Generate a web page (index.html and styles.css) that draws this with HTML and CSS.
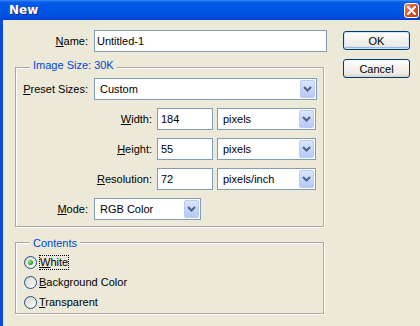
FILE: index.html
```html
<!DOCTYPE html>
<html lang="en">
<head>
  <meta charset="UTF-8" />
  <title>New</title>
  <link rel="stylesheet" href="styles.css">
</head>
<body>
  <div class="window">
    <div class="titlebar">
      <span class="title">New</span>
      <span class="close">
        <svg width="9" height="9" viewBox="0 0 9 9"><path d="M1 1 L8 8 M8 1 L1 8" stroke="#fff" stroke-width="2" stroke-linecap="square"/></svg>
      </span>
    </div>

    <div class="client">
      <div class="main">
        <div class="row">
          <label class="lbl name-lbl"><u>N</u>ame:</label>
          <input class="text name-input" type="text" value="Untitled-1">
        </div>

        <div class="group size-group">
          <div class="group-title">Image Size: 30K</div>
          <div class="size-rows">
            <div class="row">
              <label class="lbl wide-lbl"><u>P</u>reset Sizes:</label>
              <div class="select preset-select"><span>Custom</span><i class="arrow"><svg width="9" height="6" viewBox="0 0 9 6"><path d="M1 1 L4.5 4.5 L8 1" fill="none" stroke="#4d6185" stroke-width="2"/></svg></i></div>
            </div>
            <div class="row">
              <label class="lbl unit-lbl"><u>W</u>idth:</label>
              <input class="text unit-input" type="text" value="184">
              <div class="select unit-select"><span>pixels</span><i class="arrow"><svg width="9" height="6" viewBox="0 0 9 6"><path d="M1 1 L4.5 4.5 L8 1" fill="none" stroke="#4d6185" stroke-width="2"/></svg></i></div>
            </div>
            <div class="row">
              <label class="lbl unit-lbl"><u>H</u>eight:</label>
              <input class="text unit-input" type="text" value="55">
              <div class="select unit-select"><span>pixels</span><i class="arrow"><svg width="9" height="6" viewBox="0 0 9 6"><path d="M1 1 L4.5 4.5 L8 1" fill="none" stroke="#4d6185" stroke-width="2"/></svg></i></div>
            </div>
            <div class="row">
              <label class="lbl unit-lbl"><u>R</u>esolution:</label>
              <input class="text unit-input" type="text" value="72">
              <div class="select unit-select"><span>pixels/inch</span><i class="arrow"><svg width="9" height="6" viewBox="0 0 9 6"><path d="M1 1 L4.5 4.5 L8 1" fill="none" stroke="#4d6185" stroke-width="2"/></svg></i></div>
            </div>
            <div class="row">
              <label class="lbl wide-lbl"><u>M</u>ode:</label>
              <div class="select mode-select"><span>RGB Color</span><i class="arrow"><svg width="9" height="6" viewBox="0 0 9 6"><path d="M1 1 L4.5 4.5 L8 1" fill="none" stroke="#4d6185" stroke-width="2"/></svg></i></div>
            </div>
          </div>
        </div>

        <div class="group contents-group">
          <div class="group-title">Contents</div>
          <div class="radio-row"><span class="radio checked"></span><span class="radio-text focus"><u>W</u>hite</span></div>
          <div class="radio-row"><span class="radio"></span><span class="radio-text"><u>B</u>ackground Color</span></div>
          <div class="radio-row"><span class="radio"></span><span class="radio-text"><u>T</u>ransparent</span></div>
        </div>
      </div>

      <div class="buttons">
        <div class="btn btn-default">OK</div>
        <div class="btn">Cancel</div>
      </div>
    </div>
  </div>
</body>
</html>
```

FILE: styles.css
```css
* {
  margin: 0;
  padding: 0;
  box-sizing: border-box;
}

body {
  width: 420px;
  height: 326px;
  overflow: hidden;
  font-family: "Liberation Sans", Arial, sans-serif;
  font-size: 11px;
  color: #000;
  background: #ece9d8;
}

.window {
  display: flex;
  flex-direction: column;
  height: 326px;
}

/* title bar */
.titlebar {
  height: 20px;
  flex: none;
  display: flex;
  align-items: center;
  justify-content: space-between;
  padding: 0 1px 0 9px;
  background: linear-gradient(#3c8cf8 0, #0a5fe8 2px, #0058e6 5px, #0054e3 60%, #004bdc 88%, #003fcc 100%);
}

.title {
  font-family: "DejaVu Sans", sans-serif;
  font-weight: bold;
  font-size: 12px;
  line-height: 20px;
  color: #fff;
  text-shadow: 1px 1px #0b2a8c;
}

.close {
  width: 15px;
  height: 15px;
  display: flex;
  align-items: center;
  justify-content: center;
  border: 1px solid #fff;
  border-radius: 3px;
  background: linear-gradient(135deg, #e8906e, #d5522d 50%, #c13c17);
}

.close svg {
  display: block;
}

/* dialog body */
.client {
  flex: 1;
  display: flex;
  border-left: 3px solid #0b4bdc;
  padding: 10px 0 0 12px;
}

.main {
  width: 312px;
  display: flex;
  flex-direction: column;
}

.row {
  display: flex;
  align-items: center;
  height: 22px;
}

.lbl {
  flex: none;
  text-align: right;
  white-space: nowrap;
}

.name-lbl {
  width: 73px;
  margin-right: 6px;
}

.text {
  height: 22px;
  border: 1px solid #7f9db9;
  background: #fff;
  font: inherit;
  color: #000;
  padding: 0 2px;
  outline: none;
}

.name-input {
  width: 233px;
}

/* group boxes */
.group {
  width: 309px;
  display: flex;
  flex-direction: column;
  border: 1px solid #aca899;
  box-shadow: inset 1px 1px #fff, 1px 1px #fff;
}

.group-title {
  align-self: flex-start;
  margin-left: 14px;
  padding: 0 3px;
  line-height: 13px;
  color: #0046d5;
  background: #ece9d8;
}

.size-group {
  margin-top: 15px;
  padding-bottom: 6px;
}

.size-group .group-title {
  margin-top: -9px;
  margin-bottom: 6px;
}

.size-rows {
  display: flex;
  flex-direction: column;
  gap: 8px;
}

.wide-lbl {
  width: 72px;
  margin-right: 6px;
}

.unit-lbl {
  width: 136px;
  margin-right: 5px;
}

.unit-input {
  width: 56px;
  margin-right: 4px;
  padding-left: 3px;
}

/* combo boxes */
.select {
  height: 22px;
  display: flex;
  align-items: center;
  justify-content: space-between;
  border: 1px solid #7f9db9;
  background: #fff;
  padding: 1px 1px 1px 5px;
}

.select .arrow {
  width: 15px;
  height: 100%;
  display: flex;
  align-items: center;
  justify-content: center;
  border: 1px solid #b9cbf5;
  border-radius: 2px;
  background: linear-gradient(#dbe6fe, #c3d4fb 60%, #b5c9f8);
}

.select svg {
  display: block;
}

.preset-select {
  width: 223px;
}

.unit-select {
  width: 99px;
}

.mode-select {
  width: 107px;
}

/* contents */
.contents-group {
  margin-top: 15px;
  height: 72px;
}

.contents-group .group-title {
  margin-top: -6px;
  margin-bottom: 2px;
}

.radio-row {
  display: flex;
  align-items: center;
  height: 20px;
  padding-left: 8px;
}

.radio {
  width: 13px;
  height: 13px;
  margin-right: 2px;
  border: 1px solid #1c5180;
  border-radius: 50%;
  background: linear-gradient(135deg, #d6d4ca, #fff);
  display: flex;
  align-items: center;
  justify-content: center;
}

.radio.checked::after {
  content: "";
  width: 5px;
  height: 5px;
  border-radius: 50%;
  background: radial-gradient(circle at 35% 35%, #8ee88e, #2fa52f 60%, #1e8a1e);
}

.radio-text {
  line-height: 13px;
}

.radio-text.focus {
  border: 1px dotted #000;
}

/* buttons */
.buttons {
  margin-left: 16px;
  padding-top: 1px;
  display: flex;
  flex-direction: column;
  gap: 9px;
}

.btn {
  width: 67px;
  height: 19px;
  display: flex;
  align-items: center;
  justify-content: center;
  border: 1px solid #003c74;
  border-radius: 3px;
  background: linear-gradient(#fff, #f4f3ee 40%, #ecebe6 80%, #d6d0c5);
}

.btn-default {
  box-shadow: inset 0 0 0 1px #cee7ff, inset 0 -1px 0 1px #98b8ea;
}
```
